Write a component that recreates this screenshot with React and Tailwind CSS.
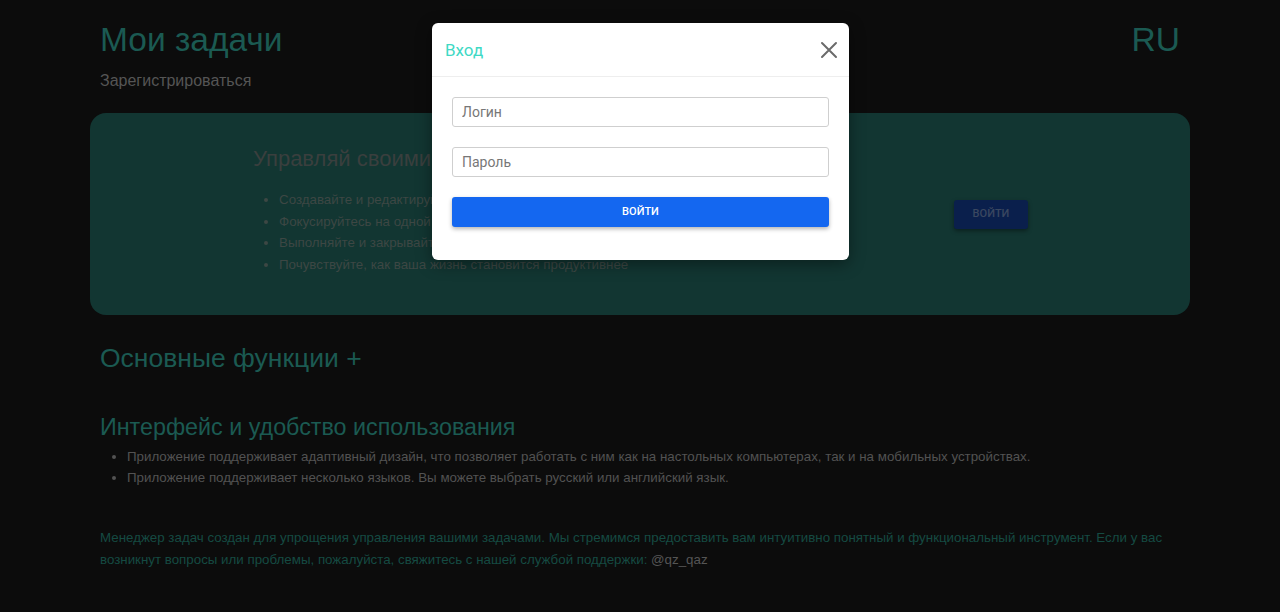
import React from "react";

export default function App() {
  return (
    <div className="relative min-h-[612px] w-full bg-[#0c0c0c] font-['Liberation_Sans','Arial',sans-serif] overflow-hidden">
      <div className="mx-auto w-[1100px] pt-[18px] pb-10">
        <header className="flex items-start justify-between px-[10px]">
          <div>
            <h1 className="text-[33.5px] leading-[44px] text-[#1b5a52]">Мои задачи</h1>
            <a className="mt-[7px] block text-[16px] leading-[24px] text-[#555555]">Зарегистрироваться</a>
          </div>
          <div className="text-[33.5px] leading-[44px] text-[#1b5a52]">RU</div>
        </header>

        <section className="mt-[20px] flex h-[202px] items-center rounded-[16px] bg-[#123632] pl-[163px]">
          <div className="w-[701px] self-start pt-[31px]">
            <h2 className="text-[22px] leading-[30px] text-[#3a3f3e]">Управляй своими задачами легко</h2>
            <ul className="mt-[15px] list-disc pl-[26px] text-[13.33px] leading-[21.5px] text-[#3d4744] marker:text-[#3d4744]">
              <li>Создавайте и редактируйте задачи</li>
              <li>Фокусируйтесь на одной задаче за раз</li>
              <li>Выполняйте и закрывайте задачи</li>
              <li>Почувствуйте, как ваша жизнь становится продуктивнее</li>
            </ul>
          </div>
          <button className="h-[29px] w-[74px] rounded-[3px] bg-[#0a1f4c] font-['Roboto',sans-serif] text-[11px] font-medium uppercase text-[#3a4760] shadow-[0_2px_4px_rgba(0,0,0,0.4)]">
            Войти
          </button>
        </section>

        <div className="px-[10px]">
          <h2 className="mt-[26px] text-[26.5px] leading-[34px] text-[#1b5a52]">Основные функции +</h2>
          <h3 className="mt-[36px] text-[23.3px] leading-[32px] text-[#1b5a52]">Интерфейс и удобство использования</h3>
          <ul className="mt-[3px] list-disc pl-[27px] text-[13.33px] leading-[21px] text-[#525252]">
            <li>Приложение поддерживает адаптивный дизайн, что позволяет работать с ним как на настольных компьютерах, так и на мобильных устройствах.</li>
            <li>Приложение поддерживает несколько языков. Вы можете выбрать русский или английский язык.</li>
          </ul>
          <p className="mt-[39px] w-[1080px] text-[13.33px] leading-[22px] text-[#154a42]">
            Менеджер задач создан для упрощения управления вашими задачами. Мы стремимся предоставить вам интуитивно понятный и функциональный инструмент. Если у вас возникнут вопросы или проблемы, пожалуйста, свяжитесь с нашей службой поддержки: <span className="text-[#555555]">@qz_qaz</span>
          </p>
        </div>
      </div>

      <div className="absolute left-[432px] top-[23px] w-[417px] rounded-[6px] bg-white font-['Roboto',sans-serif] shadow-[0_4px_16px_rgba(0,0,0,0.4)]">
        <div className="flex h-[54px] items-center justify-between border-b border-[#eeeeee] pl-[13px] pr-[11px]">
          <span className="mt-[2px] text-[17px] text-[#3fd9c5]">Вход</span>
          <svg width="18" height="18" viewBox="0 0 18 18" className="mt-[1px] text-[#6b6b6b]">
            <path d="M2 2 L16 16 M16 2 L2 16" stroke="currentColor" strokeWidth="2" strokeLinecap="round" />
          </svg>
        </div>
        <div className="flex flex-col gap-[20px] px-[20px] pb-[33px] pt-[20px]">
          <input placeholder="Логин" className="h-[30px] w-full rounded-[3px] border border-[#cfcfcf] px-[9px] text-[14px] text-[#333] placeholder:text-[#777]" />
          <input placeholder="Пароль" className="h-[30px] w-full rounded-[3px] border border-[#cfcfcf] px-[9px] text-[14px] text-[#333] placeholder:text-[#777]" />
          <button className="h-[30px] w-full rounded-[3px] bg-[#1467f0] text-[11px] font-medium uppercase text-white shadow-[0_2px_4px_rgba(0,0,0,0.3)]">
            Войти
          </button>
        </div>
      </div>
    </div>
  );
}
